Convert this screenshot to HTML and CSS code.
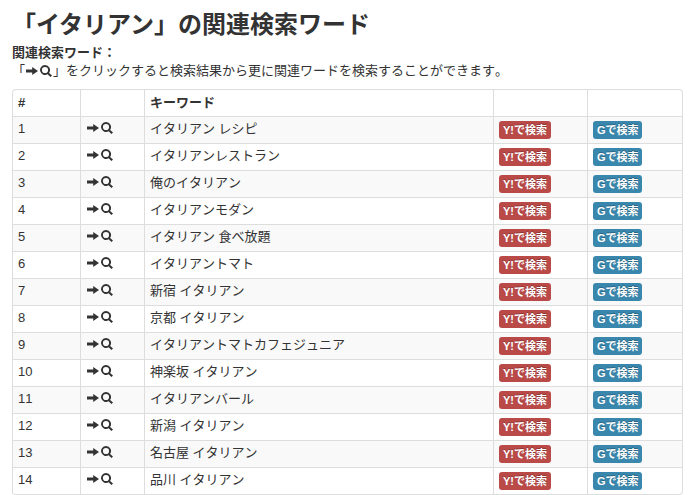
FILE: index.html
```html
<!DOCTYPE html>
<html lang="ja">
<head>
<meta charset="utf-8">
<title>関連検索ワード</title>
<link rel="stylesheet" href="styles.css">
</head>
<body>
<svg class="defs" width="0" height="0" aria-hidden="true">
  <symbol id="go" viewBox="0 0 12 8"><path d="M0 2.4H6.2V0L12 4 6.2 8V5.6H0Z"/></symbol>
  <symbol id="find" viewBox="0 0 12 12"><path fill-rule="evenodd" d="M5 0a5 5 0 0 1 4.1 7.9l2.9 2.7-1.5 1.4L7.6 9.3A5 5 0 1 1 5 0Zm0 1.9a3.1 3.1 0 1 0 0 6.2 3.1 3.1 0 0 0 0-6.2Z"/></symbol>
</svg>
<h1 class="title">「イタリアン」の関連検索ワード</h1>
<p class="intro"><strong>関連検索ワード：</strong><br>「<span class="icons"><svg class="ic-go"><use href="#go"/></svg><svg class="ic-find"><use href="#find"/></svg></span>」をクリックすると検索結果から更に関連ワードを検索することができます。</p>
<table class="kw">
<thead><tr><th class="c1">#</th><th class="c2"></th><th class="c3">キーワード</th><th class="c4"></th><th class="c5"></th></tr></thead>
<tbody>
<tr><td>1</td><td><span class="icons"><svg class="ic-go"><use href="#go"/></svg><svg class="ic-find"><use href="#find"/></svg></span></td><td>イタリアン レシピ</td><td><span class="lb red">Y!で検索</span></td><td><span class="lb blue">Gで検索</span></td></tr>
<tr><td>2</td><td><span class="icons"><svg class="ic-go"><use href="#go"/></svg><svg class="ic-find"><use href="#find"/></svg></span></td><td>イタリアンレストラン</td><td><span class="lb red">Y!で検索</span></td><td><span class="lb blue">Gで検索</span></td></tr>
<tr><td>3</td><td><span class="icons"><svg class="ic-go"><use href="#go"/></svg><svg class="ic-find"><use href="#find"/></svg></span></td><td>俺のイタリアン</td><td><span class="lb red">Y!で検索</span></td><td><span class="lb blue">Gで検索</span></td></tr>
<tr><td>4</td><td><span class="icons"><svg class="ic-go"><use href="#go"/></svg><svg class="ic-find"><use href="#find"/></svg></span></td><td>イタリアンモダン</td><td><span class="lb red">Y!で検索</span></td><td><span class="lb blue">Gで検索</span></td></tr>
<tr><td>5</td><td><span class="icons"><svg class="ic-go"><use href="#go"/></svg><svg class="ic-find"><use href="#find"/></svg></span></td><td>イタリアン 食べ放題</td><td><span class="lb red">Y!で検索</span></td><td><span class="lb blue">Gで検索</span></td></tr>
<tr><td>6</td><td><span class="icons"><svg class="ic-go"><use href="#go"/></svg><svg class="ic-find"><use href="#find"/></svg></span></td><td>イタリアントマト</td><td><span class="lb red">Y!で検索</span></td><td><span class="lb blue">Gで検索</span></td></tr>
<tr><td>7</td><td><span class="icons"><svg class="ic-go"><use href="#go"/></svg><svg class="ic-find"><use href="#find"/></svg></span></td><td>新宿 イタリアン</td><td><span class="lb red">Y!で検索</span></td><td><span class="lb blue">Gで検索</span></td></tr>
<tr><td>8</td><td><span class="icons"><svg class="ic-go"><use href="#go"/></svg><svg class="ic-find"><use href="#find"/></svg></span></td><td>京都 イタリアン</td><td><span class="lb red">Y!で検索</span></td><td><span class="lb blue">Gで検索</span></td></tr>
<tr><td>9</td><td><span class="icons"><svg class="ic-go"><use href="#go"/></svg><svg class="ic-find"><use href="#find"/></svg></span></td><td>イタリアントマトカフェジュニア</td><td><span class="lb red">Y!で検索</span></td><td><span class="lb blue">Gで検索</span></td></tr>
<tr><td>10</td><td><span class="icons"><svg class="ic-go"><use href="#go"/></svg><svg class="ic-find"><use href="#find"/></svg></span></td><td>神楽坂 イタリアン</td><td><span class="lb red">Y!で検索</span></td><td><span class="lb blue">Gで検索</span></td></tr>
<tr><td>11</td><td><span class="icons"><svg class="ic-go"><use href="#go"/></svg><svg class="ic-find"><use href="#find"/></svg></span></td><td>イタリアンバール</td><td><span class="lb red">Y!で検索</span></td><td><span class="lb blue">Gで検索</span></td></tr>
<tr><td>12</td><td><span class="icons"><svg class="ic-go"><use href="#go"/></svg><svg class="ic-find"><use href="#find"/></svg></span></td><td>新潟 イタリアン</td><td><span class="lb red">Y!で検索</span></td><td><span class="lb blue">Gで検索</span></td></tr>
<tr><td>13</td><td><span class="icons"><svg class="ic-go"><use href="#go"/></svg><svg class="ic-find"><use href="#find"/></svg></span></td><td>名古屋 イタリアン</td><td><span class="lb red">Y!で検索</span></td><td><span class="lb blue">Gで検索</span></td></tr>
<tr><td>14</td><td><span class="icons"><svg class="ic-go"><use href="#go"/></svg><svg class="ic-find"><use href="#find"/></svg></span></td><td>品川 イタリアン</td><td><span class="lb red">Y!で検索</span></td><td><span class="lb blue">Gで検索</span></td></tr>
</tbody>
</table>
</body>
</html>
```
FILE: styles.css
```css
html, body { margin: 0; padding: 0; background: #fff; }
body {
  padding: 0 18px 0 12px;
  font: 13px/18px "Liberation Sans", "Noto Sans CJK JP", sans-serif;
  font-kerning: none;
  color: #333;
  height: 495px;
  overflow: hidden;
  box-sizing: border-box;
}
.defs { position: absolute; }
.title { margin: 0; padding-top: 10px; font-size: 24px; line-height: 30px; font-weight: bold; color: #333; font-kerning: normal; }
.intro { margin: 4px 0 9px; line-height: 18px; }
.intro strong { font-weight: bold; }
.icons { display: inline-flex; align-items: center; gap: 2px; height: 12px; vertical-align: 0; }
.intro .icons { margin: 0 1px; }
.ic-go { width: 12px; height: 8px; fill: #333; }
.ic-find { width: 12px; height: 12px; fill: #333; }
.kw {
  width: 670px;
  table-layout: fixed;
  border-collapse: separate;
  border-spacing: 0;
  border: 1px solid #ddd;
  border-left: 0;
  border-radius: 4px;
}
.kw th, .kw td {
  border-left: 1px solid #ddd;
  border-top: 1px solid #ddd;
  padding: 4px 5px;
  height: 18px;
  line-height: 18px;
  text-align: left;
  vertical-align: top;
  white-space: nowrap;
}
.kw tbody td { padding: 3px 5px 4px; height: 19px; }
.kw thead th { border-top: 0; font-weight: bold; }
.kw th:first-child { border-top-left-radius: 4px; }
.kw tbody td .icons { margin-left: 1px; vertical-align: 1px; }
.c1 { width: 57px; }
.c2 { width: 53px; }
.c3 { width: 338px; }
.c4 { width: 83px; }
.c5 { width: 84px; }
.kw tbody tr:nth-child(odd) td { background: #f9f9f9; }
.lb {
  display: block;
  width: fit-content;
  margin-top: 1px;
  padding: 2px 4px;
  border-radius: 3px;
  font-size: 11px;
  line-height: 14px;
  font-weight: bold;
  color: #fff;
  text-shadow: 0 -1px 0 rgba(0,0,0,.25);
}
.red { background: #b94a48; }
.blue { background: #3a87ad; padding-right: 3px; }
```
